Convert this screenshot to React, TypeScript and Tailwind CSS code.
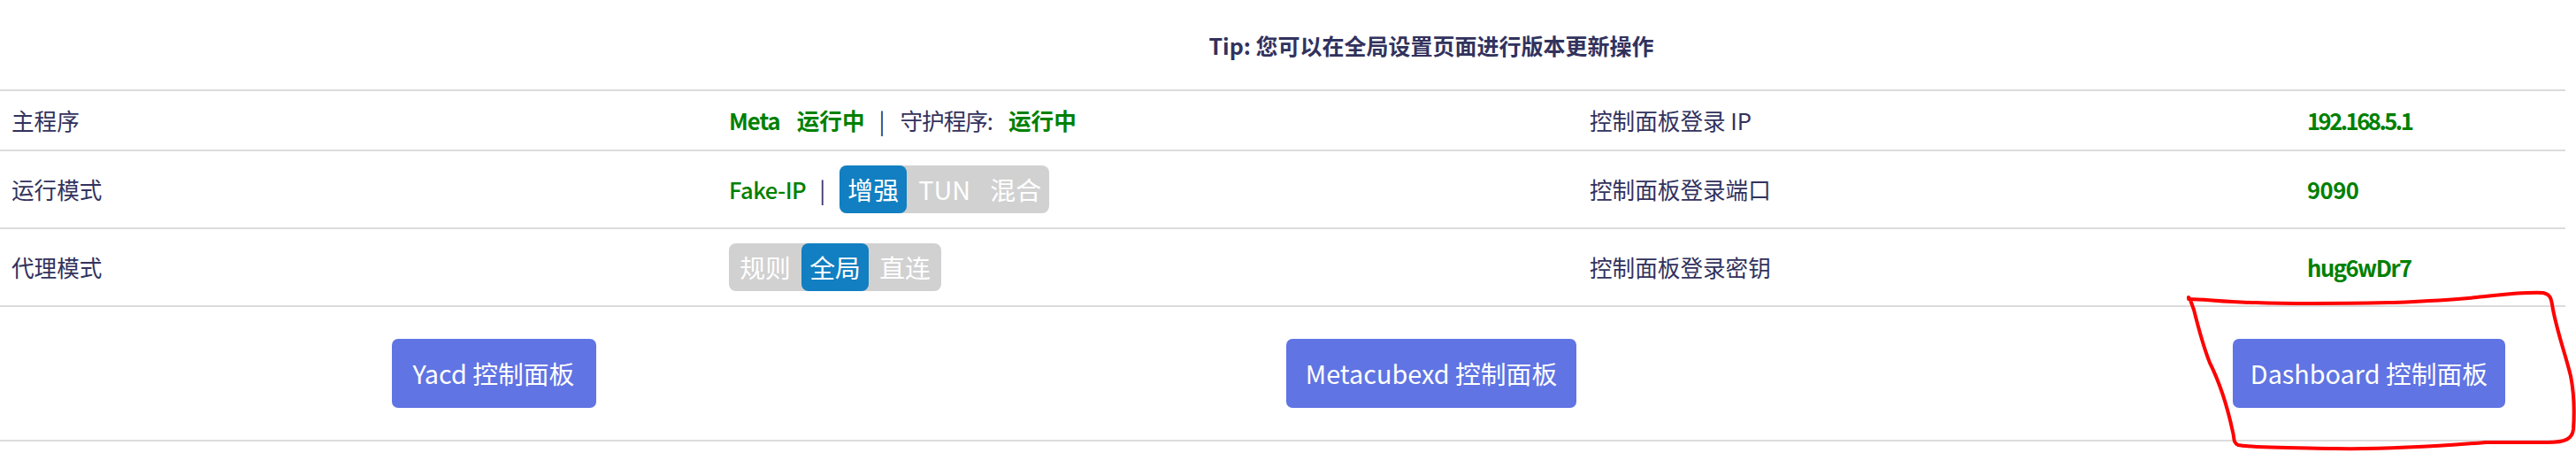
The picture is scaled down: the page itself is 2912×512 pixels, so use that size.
import React from "react";

const Seg = ({ items }: { items: { t: string; w: string; active?: boolean }[] }) => (
  <div className="flex h-[54px] rounded-[8px] bg-[#d1d1d1] text-[28.8px]">
    {items.map((it) => (
      <div
        key={it.t}
        className={
          "flex items-center justify-center rounded-[8px] text-white " +
          it.w +
          (it.active ? " bg-[#117fc1]" : "")
        }
      >
        {it.t}
      </div>
    ))}
  </div>
);

const Row = ({ children, h }: { children: React.ReactNode; h: string }) => (
  <div className={"grid grid-cols-[811px_973px_811px_1fr] border-t-2 border-[#dcdcdc] items-center " + h}>
    {children}
  </div>
);

export default function App() {
  return (
    <div className="relative w-[2912px] h-[512px] overflow-hidden bg-white text-[#32325d] text-[25.6px] leading-[34px] [font-family:'Noto_Sans_CJK_SC','Noto_Sans',sans-serif]">
      <div className="ml-[28px] w-[3180px] h-[101px] flex items-center justify-center text-[25px] font-bold">
        Tip: 您可以在全局设置页面进行版本更新操作
      </div>
      <div className="w-[2900px]">
        <Row h="h-[68px]">
          <div className="px-[13px]">主程序</div>
          <div className="px-[13px] flex items-center">
            <span className="font-bold text-[#008000] tracking-[-1px]">Meta</span>
            <span className="ml-[19px] font-bold text-[#008000]">运行中</span>
            <span className="ml-[16px]">|</span>
            <span className="ml-[17px] tracking-[-1px]">守护程序:</span>
            <span className="ml-[18px] font-bold text-[#008000]">运行中</span>
          </div>
          <div className="px-[13px]">控制面板登录 IP</div>
          <div className="px-[13px] font-semibold text-[#008000] proportional-nums tracking-[-2.5px]">192.168.5.1</div>
        </Row>
        <Row h="h-[88px]">
          <div className="px-[13px]">运行模式</div>
          <div className="px-[13px] flex items-center">
            <span className="font-medium text-[#008000] tracking-[-0.5px]">Fake-IP</span>
            <span className="ml-[15px]">|</span>
            <div className="ml-[16px]">
              <Seg
                items={[
                  { t: "增强", w: "w-[76px]", active: true },
                  { t: "TUN", w: "w-[85px]" },
                  { t: "混合", w: "w-[76px]" },
                ]}
              />
            </div>
          </div>
          <div className="px-[13px]">控制面板登录端口</div>
          <div className="px-[13px] font-semibold text-[#008000] proportional-nums tracking-[-0.5px]">9090</div>
        </Row>
        <Row h="h-[88px]">
          <div className="px-[13px]">代理模式</div>
          <div className="px-[13px] flex items-center">
            <Seg
              items={[
                { t: "规则", w: "w-[82px]" },
                { t: "全局", w: "w-[76px]", active: true },
                { t: "直连", w: "w-[82px]" },
              ]}
            />
          </div>
          <div className="px-[13px]">控制面板登录密钥</div>
          <div className="px-[13px] font-semibold text-[#008000] proportional-nums tracking-[-1.5px]">hug6wDr7</div>
        </Row>
        <div className="h-[154px] border-y-2 border-[#dcdcdc] flex items-center">
          <div className="ml-[28px] w-[3180px] shrink-0 grid grid-cols-3 text-[28.8px]">
            <div className="flex justify-center">
              <button className="h-[78px] w-[231px] rounded-[7px] bg-[#6074e3] text-white">Yacd 控制面板</button>
            </div>
            <div className="flex justify-center">
              <button className="h-[78px] w-[328px] rounded-[7px] bg-[#6074e3] text-white">Metacubexd 控制面板</button>
            </div>
            <div className="flex justify-center">
              <button className="h-[78px] w-[308px] rounded-[7px] bg-[#6074e3] text-white">Dashboard 控制面板</button>
            </div>
          </div>
        </div>
      </div>
      <svg className="absolute left-0 top-0 pointer-events-none" width="2912" height="512" viewBox="0 0 2912 512">
        <path
          d="M2474 338 C2490 338 2520 342 2550 342 C2600 344 2650 343 2705 342 C2750 340 2780 338 2800 336 C2830 333 2850 330 2875 331 C2884 333 2884 338 2886 350 C2892 380 2900 400 2906 425 C2911 450 2910 470 2909 485 C2908 496 2900 500 2880 500 C2850 500 2830 500 2810 500 C2760 504 2700 508 2640 507 C2590 506 2545 506 2530 503 C2524 500 2526 495 2524 488 C2518 460 2508 430 2498 410 C2490 390 2485 370 2480 350 C2477 342 2476 338 2474 336"
          fill="none"
          stroke="#ff0000"
          strokeWidth="4"
          strokeLinecap="round"
        />
      </svg>
    </div>
  );
}
